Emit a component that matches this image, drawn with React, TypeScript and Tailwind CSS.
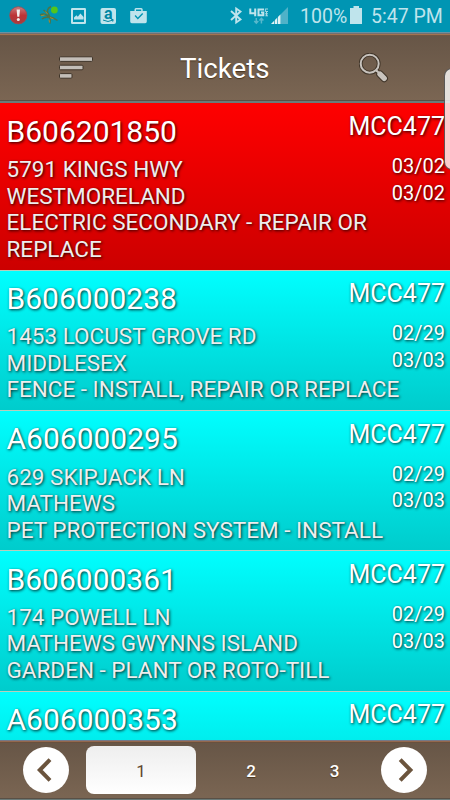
type Ticket = {
  id: string;
  code: string;
  lines: string[];
  dates: string[];
  urgent?: boolean;
};

const tickets: Ticket[] = [
  {
    id: 'B606201850',
    code: 'MCC477',
    lines: ['5791 KINGS HWY', 'WESTMORELAND', 'ELECTRIC SECONDARY - REPAIR OR', 'REPLACE'],
    dates: ['03/02', '03/02'],
    urgent: true,
  },
  {
    id: 'B606000238',
    code: 'MCC477',
    lines: ['1453 LOCUST GROVE RD', 'MIDDLESEX', 'FENCE - INSTALL, REPAIR OR REPLACE'],
    dates: ['02/29', '03/03'],
  },
  {
    id: 'A606000295',
    code: 'MCC477',
    lines: ['629 SKIPJACK LN', 'MATHEWS', 'PET PROTECTION SYSTEM - INSTALL'],
    dates: ['02/29', '03/03'],
  },
  {
    id: 'B606000361',
    code: 'MCC477',
    lines: ['174 POWELL LN', 'MATHEWS GWYNNS ISLAND', 'GARDEN - PLANT OR ROTO-TILL'],
    dates: ['02/29', '03/03'],
  },
  { id: 'A606000353', code: 'MCC477', lines: [], dates: [] },
];

function StatusBar() {
  return (
    <div className="flex h-8 shrink-0 items-center bg-[#0095b3] text-[#bfe4ec]">
      <svg width="150" height="32" viewBox="0 0 150 32" className="shrink-0">
        <defs>
          <linearGradient id="alert" x1="0" y1="0" x2="0" y2="1">
            <stop offset="0" stopColor="#c97f80" />
            <stop offset="0.5" stopColor="#bd3437" />
            <stop offset="1" stopColor="#a83a3b" />
          </linearGradient>
        </defs>
        <circle cx="18.3" cy="15.3" r="8.6" fill="url(#alert)" stroke="#9f4a50" strokeWidth="0.8" />
        <path d="M16.6 9.5h3.4l-.7 7.2h-2z" fill="#f3eeee" />
        <circle cx="18.3" cy="19.6" r="1.5" fill="#f3eeee" />
        <path d="M51 6.5c-4 2-4.500 5-2 8.500 1 3 2 5 1 8.500M40 15c3-1.500 6-1 8.500 1.500 3 .5 6 1.500 9 4M42 19c2.500-2.500 5-2 7-1.500M43.500 10l5 4" fill="none" stroke="#4c7448" strokeWidth="1.5" />
        <path d="M41 15.800l3.500-.8M50 17.500l3.500 1.500M45.500 11.500l2 2.500M49 19.500l.5 3" stroke="#a78b32" strokeWidth="1" />
        <circle cx="54.4" cy="10" r="3.4" fill="#53c51c" />
        <path fillRule="evenodd" fill="#bfe4ec" d="M72.2 8h12.6q1.2 0 1.2 1.2v13.6q0 1.2-1.2 1.2H72.2q-1.2 0-1.2-1.2V9.2Q71 8 72.2 8zM73 10v12h11V10zM74 19.6v-2l2.4-2.3 1.4 1.5 2.6-3.2L83.6 17v2.6z" />
        <rect x="100.5" y="8" width="15.5" height="16" rx="2" fill="#bfe4ec" />
        <text x="108.2" y="18.6" textAnchor="middle" fontSize="16" fontWeight="700" fill="#0087a3">a</text>
        <path d="M103 20q5 3 10 0m-1.800-.6 2 .2-.5 2" fill="none" stroke="#0087a3" strokeWidth="1" />
        <path fillRule="evenodd" fill="#bfe4ec" d="M130.2 11h4.3V9.5q0-1.5 1.5-1.5h5.2q1.5 0 1.5 1.5V11h4.1v10.6q0 1.6-1.6 1.6h-13.4q-1.6 0-1.6-1.6zM136 11h5.2V9.5H136zM134.6 16l3.2 3.4 5.4-5.3-1-1-4.4 4.3-2.2-2.3z" />
      </svg>
      <div className="flex-1" />
      <svg width="70" height="32" viewBox="230 0 70 32" className="shrink-0">
        <path d="M231 11l9.500 8.500-4.300 3V8.500l4.300 3-9.500 8.500" fill="none" stroke="#bfe4ec" strokeWidth="1.9" />
        <path d="M250.300 8.500v4.700h6M255.200 8.500v7.700M264 9.500h-5.500v5.800h4.800v-2.800h-2.300" fill="none" stroke="#bfe4ec" strokeWidth="2" />
        <path d="M265.400 8.500v3h2.600M265 13.800h3M266.500 11.500v4.500M265.400 15.800h2.600M266 9h2" fill="none" stroke="#a5d8e3" strokeWidth="1" />
        <path d="M256.300 18v5m-2-2 2 2.200 2-2.200M261.400 23.500v-5m-2 2 2-2.200 2 2.200" fill="none" stroke="#58b8cc" strokeWidth="1.5" />
        <path d="M271 24l17-17v17z" fill="#4fb2c8" />
        <path d="M271 24l3-3v3zM275 20l2-2v6h-2zM278 17l2.400-2.400V24H278z" fill="#e0f3f6" />
      </svg>
      <span className="w-[49px] whitespace-nowrap pt-[2px] text-[19.5px] leading-none">100%</span>
      <svg width="15" height="32" viewBox="0 0 15 32" className="mr-[7px] shrink-0">
        <path d="M4.500 6h5.500v2h3v16H1V8h3.500z" fill="#bfe4ec" />
      </svg>
      <span className="w-[79px] whitespace-nowrap pt-[2px] text-[19.5px] leading-none">5:47 PM</span>
    </div>
  );
}

function Header() {
  return (
    <header className="flex h-[71.4px] shrink-0 items-center border-b-2 border-[#6b7b79] bg-linear-to-b from-[#665546] to-[#7b6653] pt-[3px] shadow-[inset_0_1px_0_#6b91a0,inset_0_2px_0_#6f7072,inset_0_3px_0_#a27452,inset_0_4px_0_#705742,inset_0_-1px_0_#5a5045]">
      <svg width="34" height="24" viewBox="0 0 34 24" className="ml-[59px]" fill="#c3beb8" stroke="#403529" strokeWidth="1">
        <rect x="0.5" y="0.8" width="33" height="4.6" rx="1" />
        <rect x="0.5" y="9.2" width="23.5" height="4.6" rx="1" />
        <rect x="0.5" y="17.6" width="12.5" height="4.6" rx="1" />
      </svg>
      <h1 className="ml-[87px] w-[90px] whitespace-nowrap pt-[2px] text-[27.7px] leading-none text-white [text-shadow:0_1px_1px_#49351d]">
        Tickets
      </h1>
      <svg width="30" height="30" viewBox="0 0 30 30" className="ml-[89px]">
        <g fill="none" stroke="#403529" strokeLinecap="round">
          <circle cx="10.7" cy="10.7" r="9" strokeWidth="3.8" />
          <path d="M17.5 17.5l3 3" strokeWidth="3.5" />
          <path d="M21 21.2l4.2 4.2" strokeWidth="7.5" />
        </g>
        <g fill="none" stroke="#c8c3bd" strokeLinecap="round">
          <circle cx="10.7" cy="10.7" r="9" strokeWidth="2" />
          <path d="M17.5 17.5l3 3" strokeWidth="2" />
          <path d="M21 21.2l4.2 4.2" strokeWidth="5.4" />
        </g>
      </svg>
    </header>
  );
}

function TicketRow({ ticket }: { ticket: Ticket }) {
  return (
    <article
      className={
        'flex shrink-0 justify-between border-b border-[#b9cdbb] pr-[5px] pl-[6.5px] text-white [text-shadow:1px_1px_3px_rgba(0,0,0,0.85)] ' +
        (ticket.urgent
          ? 'h-[167.2px] bg-linear-to-b from-[#ff0000] to-[#cc0000]'
          : 'h-[140.35px] bg-linear-to-b from-[#00ffff] to-[#00cccc]')
      }
    >
      <div className="min-w-0 pt-[10.3px] whitespace-nowrap">
        <h2 className="text-[30px] leading-[36px]">{ticket.id}</h2>
        <div className="mt-[6.3px] text-[22.5px] leading-[26.6px] text-[#eeeeee]">
          {ticket.lines.map((line) => (
            <p key={line}>{line}</p>
          ))}
        </div>
      </div>
      <div className="flex w-0 shrink-0 flex-col items-end pt-[8.8px] whitespace-nowrap">
        <div className="text-[25px] leading-[30px]">{ticket.code}</div>
        <div className="mt-[11px] text-[20px] leading-[26.6px]">
          {ticket.dates.map((date, i) => (
            <div key={i}>{date}</div>
          ))}
        </div>
      </div>
    </article>
  );
}

function Arrow({ back }: { back?: boolean }) {
  return (
    <svg width="46" height="46" viewBox="0 0 46 46" className="shrink-0">
      <circle cx="23" cy="23" r="23" fill="#fff" />
      <path
        d={back ? 'M27 12.7L16.8 23 27 33.3' : 'M19.2 12.7L29.4 23 19.2 33.3'}
        fill="none"
        stroke="#6b543d"
        strokeWidth="4"
      />
    </svg>
  );
}

function Pager() {
  return (
    <footer className="flex h-[60px] shrink-0 items-center bg-linear-to-b from-[#665546] to-[#7b6653] pl-[23px] text-[17px] font-medium text-white shadow-[inset_0_1px_0_#747989,inset_0_2px_0_#94684d,inset_0_3px_0_#69513e,inset_0_-1px_0_#6b7b79,inset_0_-2px_0_#5a5045]">
      <Arrow back />
      <div className="ml-[17px] flex h-12 w-[110px] items-center justify-center rounded-[8px] bg-linear-to-b from-[#eeeeee] to-white pt-[3px] font-normal text-[#604830]">
        1
      </div>
      <span className="w-[110px] pt-[3px] text-center [text-shadow:0_1px_1px_#49351d]">2</span>
      <span className="w-[57px] pt-[3px] text-center [text-shadow:0_1px_1px_#49351d]">3</span>
      <span className="ml-[18px] flex">
        <Arrow />
      </span>
    </footer>
  );
}

export default function App() {
  return (
    <div className="relative flex h-[800px] w-[450px] flex-col overflow-hidden font-['Roboto',sans-serif]">
      <StatusBar />
      <Header />
      <main className="flex h-[636.6px] flex-col overflow-hidden">
        {tickets.map((ticket) => (
          <TicketRow key={ticket.id} ticket={ticket} />
        ))}
      </main>
      <Pager />
      <div className="absolute top-[68px] -right-3 h-[102px] w-[18px] rounded-[8px] border border-black/60 bg-white/80" />
    </div>
  );
}
